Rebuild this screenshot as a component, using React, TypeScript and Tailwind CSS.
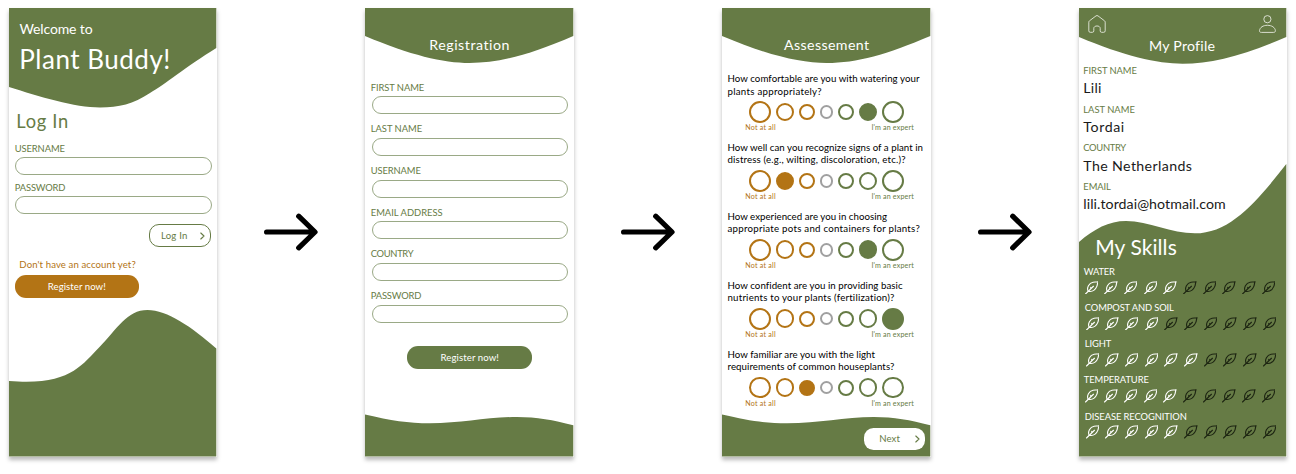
import { useLayoutEffect, useRef, useState } from "react";
import type { ReactNode } from "react";

/** Single line of text whose tracking is spread to fill `w` pixels. */
function Fit({ w, className = "", children }: { w: number; className?: string; children: string }) {
  const ref = useRef<HTMLSpanElement>(null);
  const [spacing, setSpacing] = useState(0);
  useLayoutEffect(() => {
    const el = ref.current;
    if (!el) return;
    el.style.letterSpacing = "0px";
    const natural = el.getBoundingClientRect().width;
    setSpacing((w - natural) / children.length);
    el.style.letterSpacing = `${(w - natural) / children.length}px`;
  }, [w, children]);
  return (
    <span ref={ref} className={`inline-block self-start whitespace-pre ${className}`} style={{ letterSpacing: `${spacing}px` }}>
      {children}
    </span>
  );
}

function Phone({ wide, waves, children }: { wide?: boolean; waves: string[]; children: ReactNode }) {
  return (
    <section
      className={`relative h-[448.5px] shrink-0 bg-white shadow-[0_3px_4px_rgba(0,0,0,0.27)] ${wide ? "w-[208.3px] mr-[-0.3px]" : "w-[207.3px] mr-[-0.3px]"}`}
    >
      <svg className="absolute inset-0 h-full w-full" viewBox={wide ? "0 0 208.3 448.5" : "0 0 207.3 448.5"} fill="#667b45">
        {waves.map((d) => (
          <path key={d} d={d} />
        ))}
      </svg>
      <div className="relative flex h-full flex-col">{children}</div>
    </section>
  );
}

function Arrow() {
  return (
    <div className="flex w-[149px] shrink-0 items-center pl-[48px]">
      <svg width="54" height="38" viewBox="0 0 54 38" fill="none" stroke="#000" strokeWidth="5.2" strokeLinecap="round" strokeLinejoin="round">
        <path d="M2.6 19H50M34.7 3.2L51 19L34.7 34.8" />
      </svg>
    </div>
  );
}

function Chevron() {
  return (
    <svg width="5" height="8" viewBox="0 0 5 8" fill="none" stroke="#667b45" strokeWidth="1.1" strokeLinecap="round" strokeLinejoin="round">
      <path d="M0.8 1L4 4L0.8 7" />
    </svg>
  );
}

const field = "h-[18px] w-[196.5px] rounded-full border border-[#9aa986] bg-white";

const headWide = "M0 0H208.3V28C165 46.5 135 55 104.5 55C78 55 45 47 0 28Z";
const footWide = "M0 406.5C26 412.5 43 415.3 65 415.3C97 415.3 122 409 152 409C172 409 188 412 208.3 417.3V448.5H0Z";

function LoginScreen() {
  return (
    <Phone
      waves={[
        "M0 0H207.3V40C178 58 155 77 141 85C124 96 110 99.5 91 99.5C66 99.5 30 88.5 0 79Z",
        "M0 373C60 378 72 358 91 338.5C108 321 118 302 138.5 302C158 302 183 319 207.3 340.5V448.5H0Z",
      ]}
    >
      <Fit w={73} className="mt-[13px] ml-[10.2px] text-[14px] leading-[16px] text-white">Welcome to</Fit>
      <Fit w={151.5} className="mt-[8px] ml-[10px] text-[26px] leading-[28px] text-white">Plant Buddy!</Fit>
      <Fit w={52.5} className="mt-[38px] ml-[7px] text-[18.3px] leading-[20px]">Log In</Fit>
      <Fit w={50} className="mt-[12.6px] ml-[5.5px] text-[9.4px] leading-[10px]">USERNAME</Fit>
      <div className={`mt-[3.4px] ml-[6px] ${field}`} />
      <Fit w={50.5} className="mt-[7.6px] ml-[5.5px] text-[9.4px] leading-[10px]">PASSWORD</Fit>
      <div className={`mt-[3.4px] ml-[6px] ${field}`} />
      <button className="mt-[10.2px] mr-[5.6px] flex h-[22.8px] w-[62px] items-center self-end rounded-[10px] border-[1.5px] border-[#667b45] pl-[11px]">
        <Fit w={26.5} className="mr-[12px] text-[9.6px] leading-[21px]">Log In</Fit>
        <Chevron />
      </button>
      <Fit w={116.5} className="mt-[13.4px] ml-[10px] text-[9.6px] leading-[10px] text-[#b37415]">Don't have an account yet?</Fit>
      <button className="mt-[4.3px] ml-[5.3px] flex h-[23px] w-[124.5px] justify-center rounded-[11px] bg-[#b37415] text-white">
        <Fit w={58} className="text-[9.6px] leading-[23px]">Register now!</Fit>
      </button>
    </Phone>
  );
}

const registration: [string, number][] = [
  ["FIRST NAME", 53.5],
  ["LAST NAME", 51.5],
  ["USERNAME", 50],
  ["EMAIL ADDRESS", 72],
  ["COUNTRY", 42.5],
  ["PASSWORD", 50.5],
];

function RegistrationScreen() {
  return (
    <Phone wide waves={[headWide, footWide]}>
      <Fit w={81} className="mt-[29px] ml-[64px] text-[14.2px] leading-[16px] text-white">Registration</Fit>
      <div className="mt-[29.8px] ml-[5.8px] flex flex-col">
        {registration.map(([label, w]) => (
          <div key={label} className="flex h-[41.65px] flex-col">
            <Fit w={w} className="ml-[-0.4px] text-[9.4px] leading-[10px]">{label}</Fit>
            <div className={`mt-[3.6px] ml-[0.5px] ${field}`} />
          </div>
        ))}
      </div>
      <button className="mt-[13.1px] ml-[42px] flex h-[23.3px] w-[125px] justify-center rounded-[11px] bg-[#667b45] text-white">
        <Fit w={58.5} className="text-[9.6px] leading-[23px]">Register now!</Fit>
      </button>
    </Phone>
  );
}

const questions: { lines: [string, number][]; picked: number }[] = [
  { lines: [["How comfortable are you with watering your", 192], ["plants appropriately?", 94.5]], picked: 5 },
  { lines: [["How well can you recognize signs of a plant in", 195.5], ["distress (e.g., wilting, discoloration, etc.)?", 178.5]], picked: 1 },
  { lines: [["How experienced are you in choosing", 159.5], ["appropriate pots and containers for plants?", 192.5]], picked: 5 },
  { lines: [["How confident are you in providing basic", 175], ["nutrients to your plants (fertilization)?", 167.5]], picked: 6 },
  { lines: [["How familiar are you with the light", 147.5], ["requirements of common houseplants?", 167]], picked: 2 },
];

const dots = [
  { size: "size-[21.6px]", line: "border-[#b37415]", fill: "bg-[#b37415]" },
  { size: "size-[18.8px]", line: "border-[#b37415]", fill: "bg-[#b37415]" },
  { size: "size-[16px]", line: "border-[#b37415]", fill: "bg-[#b37415]" },
  { size: "size-[13.4px]", line: "border-[#a0a0a0]", fill: "bg-[#a0a0a0]" },
  { size: "size-[16.2px]", line: "border-[#667b45]", fill: "bg-[#667b45]" },
  { size: "size-[18.8px]", line: "border-[#667b45]", fill: "bg-[#667b45]" },
  { size: "size-[21.6px]", line: "border-[#667b45]", fill: "bg-[#667b45]" },
];

function AssessmentScreen() {
  return (
    <Phone wide waves={[headWide, footWide]}>
      <Fit w={85.5} className="mt-[29px] ml-[61.7px] text-[14.2px] leading-[16px] text-white">Assessement</Fit>
      <div className="mt-[19.3px] flex flex-col">
        {questions.map(({ lines, picked }) => (
          <div key={lines[0][0]} className="flex h-[68.9px] flex-col pl-[5.2px] text-black">
            {lines.map(([text, w]) => (
              <Fit key={text} w={w} className="text-[9.7px] leading-[12.2px]">{text}</Fit>
            ))}
            <div className="mt-[4.6px] ml-[21.8px] flex w-[154.4px] items-center justify-between">
              {dots.map((d, i) => (
                <span key={i} className={`rounded-full border-2 ${d.size} ${d.line} ${i === picked ? d.fill : ""}`} />
              ))}
            </div>
            <div className="mt-[1.5px] ml-[17.8px] flex w-[168.6px] justify-between">
              <Fit w={30.5} className="text-[7.1px] leading-[8px] text-[#b37415]">Not at all</Fit>
              <Fit w={42.5} className="text-[7.1px] leading-[8px] text-[#667b45]">I'm an expert</Fit>
            </div>
          </div>
        ))}
      </div>
      <button className="mt-[11.4px] mr-[5.8px] flex h-[21.4px] w-[60.5px] items-center self-end rounded-[9.5px] bg-white pl-[15px]">
        <Fit w={20.7} className="mr-[14.5px] text-[9.6px] leading-[21px]">Next</Fit>
        <Chevron />
      </button>
    </Phone>
  );
}

function HomeIcon() {
  return (
    <svg width="18" height="18" viewBox="0 0 18 18" fill="none" stroke="#e6eadf" strokeWidth="0.9" strokeLinejoin="round">
      <path d="M0.8 7.2Q0.8 6.4 1.4 5.9L8 0.9Q9 0.2 10 0.9L16.6 5.9Q17.2 6.4 17.2 7.2V15.8Q17.2 17.3 15.7 17.3H13.6Q12.2 17.3 12.2 15.8V13.3C12.2 10.2 5.8 10.2 5.8 13.3V15.8Q5.8 17.3 4.4 17.3H2.3Q0.8 17.3 0.8 15.8Z" />
    </svg>
  );
}

function UserIcon() {
  return (
    <svg width="17" height="18" viewBox="0 0 17 18" fill="none" stroke="#e6eadf" strokeWidth="0.9" strokeLinejoin="round">
      <circle cx="8.4" cy="4.2" r="3.6" />
      <path d="M2.4 17.4C1 17.4 0.4 16.8 0.5 15.6C0.9 12.4 4 10.3 8.4 10.3C12.8 10.3 16 12.4 16.4 15.6C16.5 16.8 15.8 17.4 14.4 17.4Z" />
    </svg>
  );
}

function Leaf({ lit }: { lit: boolean }) {
  return (
    <svg width="13.5" height="13.5" viewBox="0 0 40 40" fill="none" stroke={lit ? "#ffffff" : "#1d2512"} strokeWidth="3.3" strokeLinecap="round" strokeLinejoin="round">
      <path d="M9.5 30.5C4 20 12 6 24 3.5C29 2.5 33 3.5 38.5 2C36.5 7 37 11 35 16C31 26 21 32.5 9.5 30.5Z" />
      <path d="M1.5 38.5L25 15.5M17 22.5V19" />
    </svg>
  );
}

const profile: [string, number, string, number][] = [
  ["FIRST NAME", 53.5, "Lili", 18.5],
  ["LAST NAME", 51.5, "Tordai", 41.5],
  ["COUNTRY", 42.5, "The Netherlands", 109],
  ["EMAIL", 27.5, "lili.tordai@hotmail.com", 142.5],
];

const skills: { name: string; w: number; level: number; shift: string }[] = [
  { name: "WATER", w: 31, level: 5, shift: "pl-[4.5px]" },
  { name: "COMPOST AND SOIL", w: 89, level: 4, shift: "pl-[5.5px]" },
  { name: "LIGHT", w: 26.5, level: 6, shift: "pl-[5.5px]" },
  { name: "TEMPERATURE", w: 65, level: 5, shift: "pl-[4.5px]" },
  { name: "DISEASE RECOGNITION", w: 102, level: 5, shift: "pl-[5.5px]" },
];

function ProfileScreen() {
  return (
    <Phone
      waves={[
        "M0 0H207.3V29C165 47.5 133 55.7 103.5 55.7C78 55.7 45 48 0 29Z",
        "M0 234C15 221 30 213 47 213C70 213 92 225.3 116 225.3C152 225.3 179 192 207.3 156V448.5H0Z",
      ]}
    >
      <div className="mt-[7px] flex justify-between pr-[11px] pl-[9px]">
        <HomeIcon />
        <UserIcon />
      </div>
      <Fit w={66} className="mt-[4.6px] ml-[69.7px] text-[14.2px] leading-[16px] text-white">My Profile</Fit>
      <div className="mt-[12.2px] ml-[4px] flex flex-col">
        {profile.map(([label, lw, value, vw]) => (
          <div key={label} className="flex h-[38.8px] flex-col">
            <Fit w={lw} className="text-[9.4px] leading-[10px]">{label}</Fit>
            <Fit w={vw} className="mt-[4.2px] text-[14.2px] leading-[16px] text-[#1a1a1a]">{value}</Fit>
          </div>
        ))}
      </div>
      <Fit w={81.5} className="mt-[13.8px] ml-[16px] text-[21px] leading-[24px] text-white">My Skills</Fit>
      <div className="mt-[8.2px] flex flex-col text-white">
        {skills.map(({ name, w, level, shift }) => (
          <div key={name} className={`flex h-[36.15px] flex-col ${shift}`}>
            <Fit w={w} className="text-[9.4px] leading-[10px]">{name}</Fit>
            <div className="mt-[3.8px] ml-[0.8px] flex w-[190.8px] justify-between">
              {Array.from({ length: 10 }, (_, i) => (
                <Leaf key={i} lit={i < level} />
              ))}
            </div>
          </div>
        ))}
      </div>
    </Phone>
  );
}

export default function App() {
  return (
    <main className="flex h-[474px] w-[1296px] overflow-hidden bg-white pt-[8px] pl-[9.3px] font-['Lato',sans-serif] text-[#667b45]">
      <div className="flex h-[448.5px]">
        <LoginScreen />
        <Arrow />
        <RegistrationScreen />
        <Arrow />
        <AssessmentScreen />
        <Arrow />
        <ProfileScreen />
      </div>
    </main>
  );
}
